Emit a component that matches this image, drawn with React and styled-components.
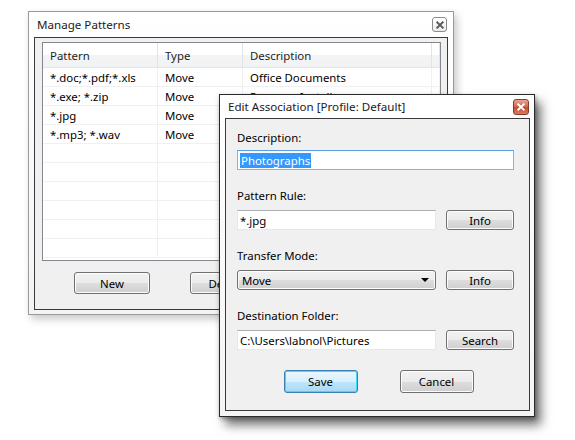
import React from "react";
import styled, { createGlobalStyle, css } from "styled-components";

const Global = createGlobalStyle`
  html, body { margin: 0; padding: 0; background: #ffffff; }
  body { font-family: "Noto Sans", "Open Sans", sans-serif; font-size: 11.4px; color: #000; }
`;

const Desktop = styled.div`
  position: relative;
  width: 575px;
  height: 440px;
  overflow: hidden;
  background: #ffffff;
`;

const Window = styled.div`
  position: absolute;
  left: ${(p) => p.$x}px;
  top: ${(p) => p.$y}px;
  width: ${(p) => p.$w}px;
  height: ${(p) => p.$h}px;
  box-sizing: border-box;
  display: flex;
  flex-direction: column;
  border: 1px solid ${(p) => (p.$active ? "#2a2a2a" : "#9a9a9a")};
  background: linear-gradient(#ffffff, #f4f4f4);
  padding: 0 ${(p) => (p.$active ? 4 : 5)}px ${(p) => (p.$active ? 5 : 4)}px 5px;
  box-shadow: ${(p) =>
    p.$active
      ? "6px 8px 10px rgba(0,0,0,0.55), 1px 2px 4px rgba(0,0,0,0.3)"
      : "3px 4px 8px rgba(0,0,0,0.22)"};
`;

const TitleBar = styled.div`
  height: ${(p) => p.$h}px;
  flex: none;
  display: flex;
  align-items: center;
  justify-content: space-between;
  padding-left: 3px;
  padding-right: ${(p) => p.$pr}px;
  box-sizing: border-box;
`;

const Title = styled.span`
  font-size: 11.6px;
  color: #1b1b1b;
  white-space: nowrap;
`;

const CloseBox = styled.div`
  width: 15px;
  height: 15px;
  box-sizing: border-box;
  border-radius: 3px;
  display: flex;
  align-items: center;
  justify-content: center;
  ${(p) =>
    p.$red
      ? css`
          width: 16px;
          height: 16px;
          border: 1px solid #8a3b2a;
          background: linear-gradient(#e8a493, #d2644a 50%, #c24a30 51%, #d87a5f);
        `
      : css`
          border: 1px solid #8c8c8c;
          background: linear-gradient(#ffffff, #ececec);
        `}
`;

const Frame = styled.div`
  flex: 1;
  border: 1px solid #3a3a3a;
  background: #f0f0f0;
  display: flex;
  flex-direction: column;
  box-sizing: border-box;
`;

/* ---------- back window ---------- */

const ListBox = styled.div`
  margin: 4px 6px 0 7px;
  height: 219px;
  flex: none;
  border: 1px solid #828790;
  background: #ffffff;
  box-sizing: border-box;
  display: flex;
  flex-direction: column;
  overflow: hidden;
`;

const cols = "115px 85px 189px 1fr";

const HeaderRow = styled.div`
  display: grid;
  flex: none;
  grid-template-columns: ${cols};
  height: 25px;
  box-sizing: border-box;
  background: linear-gradient(#ffffff, #ffffff 50%, #f3f4f6 51%, #f1f2f4);
  border-bottom: 1px solid #e5e5e5;
`;

const HeaderCell = styled.div`
  display: flex;
  align-items: center;
  padding-left: 7px;
  border-right: 1px solid #e2e3e5;
  color: #1e1e1e;
  white-space: nowrap;
`;

const Row = styled.div`
  display: grid;
  flex: none;
  grid-template-columns: ${cols};
  height: 19px;
  box-sizing: border-box;
  border-bottom: 1px solid #f0f0f0;
`;

const Cell = styled.div`
  display: flex;
  align-items: center;
  padding-left: 7px;
  border-right: 1px solid #f0f0f0;
  white-space: nowrap;
  overflow: hidden;
`;

const ButtonRow = styled.div`
  display: flex;
  gap: 40px;
  padding-left: 39px;
  margin-top: 11px;
`;

const Button = styled.div`
  width: ${(p) => p.$w}px;
  height: ${(p) => p.$h}px;
  box-sizing: border-box;
  border: 1px solid #707070;
  border-radius: 3px;
  display: flex;
  align-items: center;
  justify-content: center;
  color: #000;
  flex: none;
  background: linear-gradient(#f2f2f2, #ebebeb 50%, #dddddd 51%, #cfcfcf);
  box-shadow: inset 0 0 0 1px #fcfcfc;
  ${(p) =>
    p.$default &&
    css`
      border-color: #3c7fb1;
      box-shadow: inset 0 0 0 1px #48d7f8;
      background: linear-gradient(#eaf6fd, #d9f0fc 50%, #bee6fd 51%, #a7d9f5);
    `}
`;

/* ---------- front dialog ---------- */

const Form = styled.div`
  display: flex;
  flex-direction: column;
  gap: 18px;
  padding: 11px 0 0 11px;
`;

const Group = styled.div`
  display: flex;
  flex-direction: column;
  gap: ${(p) => p.$gap ?? 7}px;
`;

const Label = styled.div`
  height: 15px;
  line-height: 15px;
  color: #000;
`;

const FieldRow = styled.div`
  display: flex;
  align-items: center;
  gap: 10px;
`;

const TextBox = styled.div`
  width: ${(p) => p.$w}px;
  height: 20px;
  box-sizing: border-box;
  background: #ffffff;
  border: 1px solid ${(p) => (p.$focus ? "#7eb4ea" : "#e3e9ef")};
  border-top-color: ${(p) => (p.$focus ? "#569de5" : "#abadb3")};
  display: flex;
  align-items: center;
  padding-left: 2px;
  white-space: nowrap;
`;

const Selected = styled.span`
  background: #3399ff;
  color: #ffffff;
  padding: 0 1px;
  line-height: 15px;
`;

const Select = styled.div`
  width: 199px;
  height: 20px;
  box-sizing: border-box;
  border: 1px solid #707070;
  border-radius: 3px;
  background: linear-gradient(#f2f2f2, #ebebeb 50%, #dddddd 51%, #cfcfcf);
  box-shadow: inset 0 0 0 1px #fcfcfc;
  display: flex;
  align-items: center;
  justify-content: space-between;
  padding: 0 6px 0 4px;
`;

const Arrow = styled.span`
  width: 0;
  height: 0;
  border-left: 4px solid transparent;
  border-right: 4px solid transparent;
  border-top: 4px solid #000;
`;

const Actions = styled.div`
  display: flex;
  justify-content: center;
  gap: 42px;
  margin-top: 20px;
  padding-left: 2px;
`;

const XIcon = ({ color, size = 9 }) => (
  <svg width={size} height={size} viewBox="0 0 9 9">
    <path d="M1.5 1.5 L7.5 7.5 M7.5 1.5 L1.5 7.5" stroke={color} strokeWidth="2.2" strokeLinecap="square" />
  </svg>
);

const rows = [
  ["*.doc;*.pdf;*.xls", "Move", "Office Documents"],
  ["*.exe; *.zip", "Move", "Program Installers"],
  ["*.jpg", "Move", "Photographs"],
  ["*.mp3; *.wav", "Move", "Music Files"],
  ["", "", ""],
  ["", "", ""],
  ["", "", ""],
  ["", "", ""],
  ["", "", ""],
  ["", "", ""],
];

export default function App() {
  return (
    <>
      <Global />
      <Desktop>
        <Window $x={28} $y={11} $w={426} $h={304}>
          <TitleBar $h={25} $pr={1}>
            <Title>Manage Patterns</Title>
            <CloseBox>
              <XIcon color="#5a5a5a" size={8} />
            </CloseBox>
          </TitleBar>
          <Frame>
            <ListBox>
              <HeaderRow>
                <HeaderCell>Pattern</HeaderCell>
                <HeaderCell>Type</HeaderCell>
                <HeaderCell>Description</HeaderCell>
                <HeaderCell />
              </HeaderRow>
              {rows.map((r, i) => (
                <Row key={i}>
                  <Cell>{r[0]}</Cell>
                  <Cell>{r[1]}</Cell>
                  <Cell>{r[2]}</Cell>
                  <Cell />
                </Row>
              ))}
            </ListBox>
            <ButtonRow>
              <Button $w={76} $h={22}>New</Button>
              <Button $w={76} $h={22}>Default</Button>
              <Button $w={76} $h={22}>Delete</Button>
            </ButtonRow>
          </Frame>
        </Window>

        <Window $active $x={219} $y={94} $w={316} $h={323}>
          <TitleBar $h={23} $pr={1}>
            <Title>Edit Association [Profile: Default]</Title>
            <CloseBox $red>
              <XIcon color="#ffffff" size={8} />
            </CloseBox>
          </TitleBar>
          <Frame>
            <Form>
              <Group $gap={5}>
                <Label>Description:</Label>
                <TextBox $w={277} $focus>
                  <Selected>Photographs</Selected>
                </TextBox>
              </Group>
              <Group>
                <Label>Pattern Rule:</Label>
                <FieldRow>
                  <TextBox $w={199}>*.jpg</TextBox>
                  <Button $w={68} $h={20}>Info</Button>
                </FieldRow>
              </Group>
              <Group>
                <Label>Transfer Mode:</Label>
                <FieldRow>
                  <Select>
                    <span>Move</span>
                    <Arrow />
                  </Select>
                  <Button $w={68} $h={20}>Info</Button>
                </FieldRow>
              </Group>
              <Group>
                <Label>Destination Folder:</Label>
                <FieldRow>
                  <TextBox $w={199}>C:\Users\labnol\Pictures</TextBox>
                  <Button $w={68} $h={20}>Search</Button>
                </FieldRow>
              </Group>
            </Form>
            <Actions>
              <Button $w={74} $h={23} $default>Save</Button>
              <Button $w={74} $h={23}>Cancel</Button>
            </Actions>
          </Frame>
        </Window>
      </Desktop>
    </>
  );
}
